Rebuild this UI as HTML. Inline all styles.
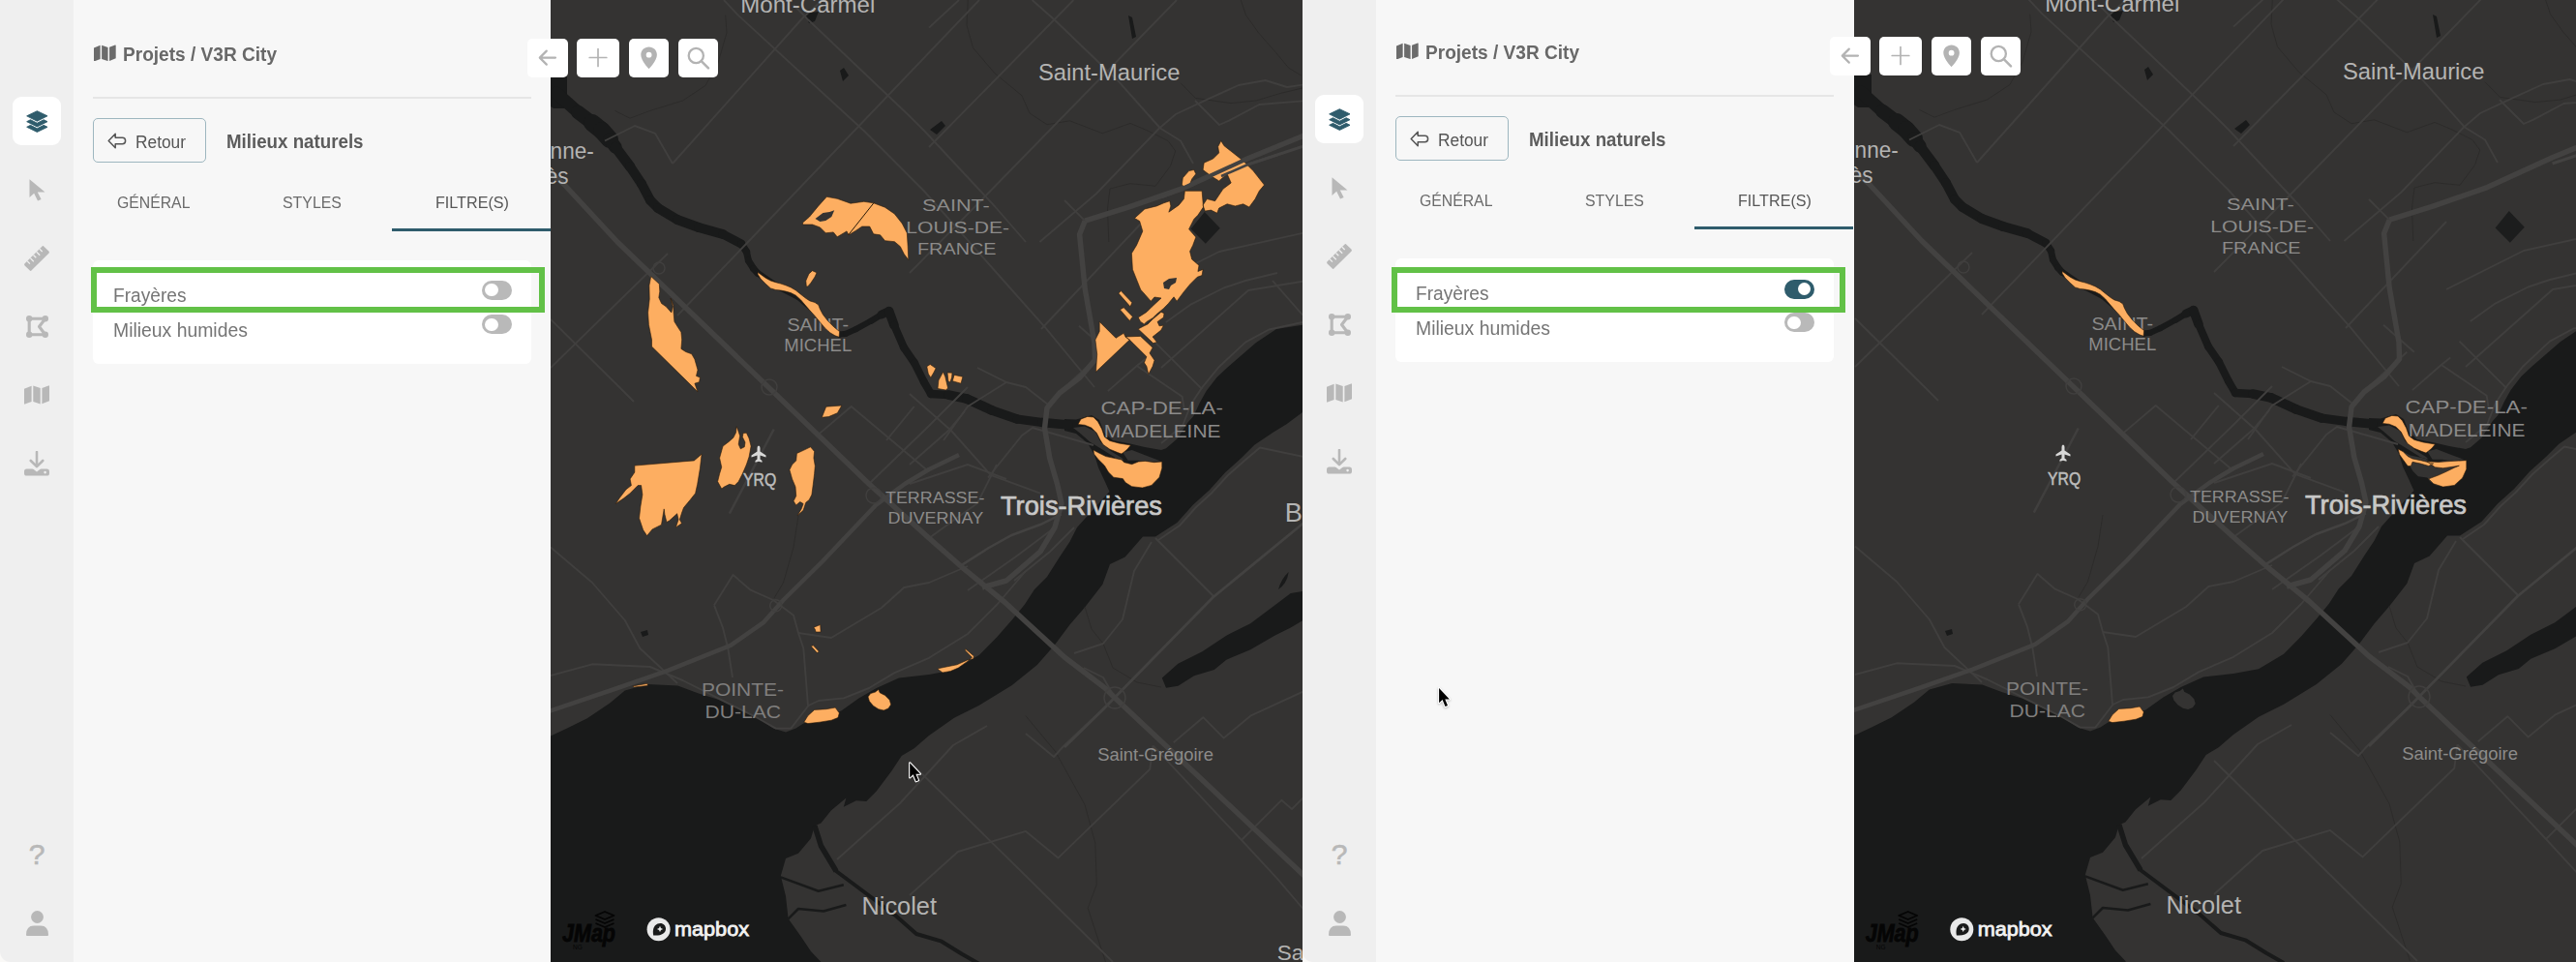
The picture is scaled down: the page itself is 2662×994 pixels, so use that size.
<!DOCTYPE html>
<html lang="fr"><head><meta charset="utf-8"><title>JMap NG - Filtres</title>
<style>
html,body{margin:0;padding:0}
body{width:2662px;height:994px;position:relative;overflow:hidden;background:#f7f7f7;font-family:"Liberation Sans",sans-serif}
.ab{position:absolute}
.shot{position:absolute;top:0;height:994px;overflow:hidden;background:#faf9f7}
.side{position:absolute;left:0;top:0;width:76px;height:994px;background:#efefef;border-bottom-left-radius:11px}
.pan{position:absolute;left:76px;top:0;width:493px;height:994px;background:#f7f7f7}
.tile{width:50px;height:50px;border-radius:9px;background:#fff}
.q{font-size:30px;line-height:36px;width:24px;text-align:center;color:#b8b8b8;-webkit-text-stroke:0.6px #b8b8b8}
.t{white-space:nowrap;line-height:1.2}
.t>span{display:inline-block;transform-origin:0 50%}
.title{font-size:19.5px;font-weight:700;color:#686868}
.h2{font-size:19.5px;font-weight:700;color:#5c5c5c}
.hr{width:453px;height:2px;background:#e6e6e6}
.back{width:114.5px;height:44px;border:1px solid #9db6bf;border-radius:5px;background:#f7f7f7}
.tab{font-size:17.3px;color:#6a6a6a}
.tab.act{color:#565656}
.ul{width:164px;height:3px;background:#2f5c6c}
.card{width:453px;height:106.5px;border-radius:6px;background:#fff}
.row{font-size:19.7px;color:#757575}
.tg{width:30.5px;height:20px;border-radius:10px;background:#b9b9b9}
.tg i{position:absolute;left:3.2px;top:3.2px;width:13.6px;height:13.6px;border-radius:50%;background:#fff}
.tg.on{background:#2f5c6c}
.tg.on i{left:13.6px}
.green{width:457px;height:34.9px;border:6px solid #62c147;border-top-width:6.6px;border-bottom-width:6.6px}
.mb{height:40.5px;background:#fff;border-radius:5px;overflow:hidden}
.mb svg{display:block}
</style></head>
<body>
<div class="shot" style="left:0;width:1346px">
<div class="side"></div><div class="pan"></div>
<svg class="ab" style="left:569px;top:0" width="777" height="994" viewBox="569 0 777 994" font-family="Liberation Sans, sans-serif">
<defs><g id="basemap" font-family="Liberation Sans, sans-serif">
<rect x="540" y="-10" width="830" height="1020" fill="#343332"/>
<path d="M1100 433 L1112 433.5 L1128 429 L1136 434 L1141 447 L1150 455 L1168 458.5 L1183 462 L1200 465 L1205 463.2 L1216.6 453.2 L1227.5 436.6 L1233.3 430 L1240 415.8 L1246.6 404.1 L1257.4 390 L1268 380 L1298 354 L1319 340 L1350 335 L1350 423 L1329.5 438.2 L1316 446.5 L1296.3 459.8 L1283 473 L1266.3 488 L1249.7 506.4 L1233 521.4 L1216.4 540 L1194 554.6 L1181 554.6 L1162.7 575.4 L1147 583 L1139.3 604 L1121 627.4 L1105.5 645.5 L1090 666.3 L1071.8 687 L1045.8 708 L1012 728.7 L986 741.7 L960 760 L944.7 773.3 L931.7 781 L921.3 796.7 L905.7 817.5 L895.3 828 L884.8 827.2 L871.8 833.7 L874.4 824.6 L858.8 837.6 L848.4 850.6 L841.9 853.2 L838 866.2 L825 881.8 L812 887 L806.8 905.1 L812 926 L814.6 949.3 L827.6 967.5 L838 983 L848.4 994 L850 1000 L555 1000 L555 766 L569 760.4 L586 752.6 L606.8 742.2 L630.2 726.6 L645.8 713.6 L669.2 707 L700.4 708.4 L721.2 716.2 L742 722.7 L783.5 742.2 L799 752.6 L812 756.4 L822.5 752.6 L830.3 747.4 L869.3 734.4 L887.5 721.4 L905.7 711 L929 700.6 L960 697 L986 692.3 L1012 676.7 L1030 658.5 L1045.8 640.4 L1058.8 624.8 L1069 609 L1082 596 L1095 575.4 L1105.5 559.8 L1113 545 L1123.3 533.5 L1146.5 508 L1142 498 L1135 483 L1131 470 L1124 458 L1112 448 L1100 445 Z" fill="#191a1a"/>
<path d="M1109 442 L1121 440.5 L1132 446 L1137.3 456.8 L1148 466.2 L1159 473 L1161.6 475.7 L1153.5 473.6 L1140 464.9 L1126.5 456.8 L1115.7 447.3 Z" fill="#343332"/>
<path d="M1160.3 467.6 L1169.7 464.9 L1183.2 470.3 L1199.5 476.4 L1188.6 477 L1175 475.7 L1165.7 475.7 Z" fill="#343332"/>
<path d="M907.8 712.4 L909.2 715.8 L914.6 718.5 L919.3 723.2 L920.7 728 L918 732 L913.2 734 L907.8 732.7 L902.4 729.3 L898.4 724.6 L897 719.9 L899.7 716.5 L904.5 715.1 Z" fill="#343332"/>
<path d="M1129.9 464.9 L1134.6 467.6 L1142.7 471.6 L1152.2 473.6 L1159 475 L1161.6 477.7 L1169.7 479.7 L1176.5 477 L1183.2 476.4 L1192.7 477.7 L1200.8 477 L1200.8 483.8 L1198 493.2 L1190 501.4 L1180.5 504 L1169.7 502.7 L1163 498.6 L1160.3 494.6 L1150.8 493.2 L1145.4 487.8 L1141.4 481 L1134.6 474.3 L1130.5 469 Z" fill="#343332"/>
<path d="M1200.8 700.4 L1217.4 685.8 L1242.4 673.3 L1267.3 656.7 L1292.2 644.2 L1317.2 625.5 L1333.8 613 L1350 610.5 L1350 639 L1333.8 648.4 L1317.2 656.7 L1292.2 671.3 L1267.3 681.7 L1254.8 692 L1234 698.3 L1217.4 708.7 L1205 710.8 Z" fill="#191a1a"/>
<path d="M1244.8 219 L1260.8 235.8 L1245.8 251.7 L1230.6 236.4 Z" fill="#1c1d1d"/>
<path d="M560 78 L586 78 L586 100 L584 112 L572 112 L560 104 Z" fill="#191a1a"/>
<path d="M575 96 L597.4 116" stroke="#191a1a" stroke-width="13" stroke-linecap="round" fill="none"/>
<path d="M597.4 116 L612 127" stroke="#191a1a" stroke-width="14.5" stroke-linecap="round" fill="none"/>
<path d="M612 127 L622 135" stroke="#191a1a" stroke-width="18" stroke-linecap="round" fill="none"/>
<path d="M622 135 L630 144" stroke="#191a1a" stroke-width="18" stroke-linecap="round" fill="none"/>
<path d="M630 144 L636 152" stroke="#191a1a" stroke-width="13.5" stroke-linecap="round" fill="none"/>
<path d="M636 152 L651 172" stroke="#191a1a" stroke-width="10.5" stroke-linecap="round" fill="none"/>
<path d="M651 172 L663 190" stroke="#191a1a" stroke-width="10" stroke-linecap="round" fill="none"/>
<path d="M663 190 L672 207" stroke="#191a1a" stroke-width="10" stroke-linecap="round" fill="none"/>
<path d="M672 207 L680 215" stroke="#191a1a" stroke-width="10" stroke-linecap="round" fill="none"/>
<path d="M680 215 L700 227" stroke="#191a1a" stroke-width="10" stroke-linecap="round" fill="none"/>
<path d="M700 227 L722 235" stroke="#191a1a" stroke-width="10" stroke-linecap="round" fill="none"/>
<path d="M722 235 L747 242" stroke="#191a1a" stroke-width="10" stroke-linecap="round" fill="none"/>
<path d="M747 242 L766 252" stroke="#191a1a" stroke-width="9" stroke-linecap="round" fill="none"/>
<path d="M766 252 L771.4 260" stroke="#191a1a" stroke-width="7.5" stroke-linecap="round" fill="none"/>
<path d="M771.4 260 L773.5 269.4" stroke="#191a1a" stroke-width="7" stroke-linecap="round" fill="none"/>
<path d="M773.5 269.4 L778.7 277.7" stroke="#191a1a" stroke-width="7" stroke-linecap="round" fill="none"/>
<path d="M778.7 277.7 L783 282.3" stroke="#191a1a" stroke-width="7" stroke-linecap="round" fill="none"/>
<path d="M783 282.3 L800 294" stroke="#191a1a" stroke-width="6.5" stroke-linecap="round" fill="none"/>
<path d="M800 294 L825 307" stroke="#191a1a" stroke-width="6" stroke-linecap="round" fill="none"/>
<path d="M825 307 L846 325" stroke="#191a1a" stroke-width="6" stroke-linecap="round" fill="none"/>
<path d="M846 325 L858 340" stroke="#191a1a" stroke-width="6" stroke-linecap="round" fill="none"/>
<path d="M858 340 L867.6 345.5" stroke="#191a1a" stroke-width="6" stroke-linecap="round" fill="none"/>
<path d="M867.6 345.5 L874.3 344.7" stroke="#191a1a" stroke-width="6" stroke-linecap="round" fill="none"/>
<path d="M874.3 344.7 L884.7 340" stroke="#191a1a" stroke-width="6" stroke-linecap="round" fill="none"/>
<path d="M884.7 340 L900 331.7" stroke="#191a1a" stroke-width="6" stroke-linecap="round" fill="none"/>
<path d="M900 331.7 L911 325" stroke="#191a1a" stroke-width="6.5" stroke-linecap="round" fill="none"/>
<path d="M911 325 L918.7 321.5" stroke="#191a1a" stroke-width="9" stroke-linecap="round" fill="none"/>
<path d="M918.7 321.5 L924 336" stroke="#191a1a" stroke-width="9.5" stroke-linecap="round" fill="none"/>
<path d="M924 336 L934 359" stroke="#191a1a" stroke-width="8" stroke-linecap="round" fill="none"/>
<path d="M934 359 L945 375" stroke="#191a1a" stroke-width="8" stroke-linecap="round" fill="none"/>
<path d="M945 375 L955 395" stroke="#191a1a" stroke-width="8" stroke-linecap="round" fill="none"/>
<path d="M955 395 L962 407" stroke="#191a1a" stroke-width="8" stroke-linecap="round" fill="none"/>
<path d="M962 407 L980 408" stroke="#191a1a" stroke-width="8.5" stroke-linecap="round" fill="none"/>
<path d="M980 408 L999 412" stroke="#191a1a" stroke-width="9.5" stroke-linecap="round" fill="none"/>
<path d="M999 412 L1025 424" stroke="#191a1a" stroke-width="10" stroke-linecap="round" fill="none"/>
<path d="M1025 424 L1051 433" stroke="#191a1a" stroke-width="9.5" stroke-linecap="round" fill="none"/>
<path d="M1051 433 L1077 436.5" stroke="#191a1a" stroke-width="9" stroke-linecap="round" fill="none"/>
<path d="M1077 436.5 L1104 439" stroke="#191a1a" stroke-width="9.5" stroke-linecap="round" fill="none"/>
<path d="M841.9 853.2 L848.4 874 L864 900 L884.8 915.5 L905.5 931 L926.3 946.7 L947 965 L973 972.7 L994 985.7 L1012 996" stroke="#191a1a" stroke-width="4" fill="none" stroke-linejoin="round"/>
<path d="M841.9 853.2 L848.4 874 L864 900" stroke="#191a1a" stroke-width="5.5" fill="none" stroke-linejoin="round"/>
<path d="M806.8 906.4 L845.8 920.7 L871.8 914.2" stroke="#191a1a" stroke-width="2.6" fill="none" stroke-linejoin="round"/>
<path d="M814.6 949.3 L825 939 L851 941.5 L874.4 935" stroke="#191a1a" stroke-width="2.6" fill="none" stroke-linejoin="round"/>
<path d="M1321 609 Q1330 603 1331.7 591 Q1324 598 1321 609Z" fill="#191a1a"/>
<path d="M1166 16 L1170 18 L1174 38 L1170 40 Z" fill="#191a1a"/>
<path d="M961 134 L973 125 L977 130 L968 139 Z" fill="#191a1a"/>
<path d="M868 73 L872 70 L877 78 L871 84 Z" fill="#191a1a"/>
<path d="M832 14 L846 12 L842 22 L836 24 Z" fill="#191a1a"/>
<path d="M662 653 L669 651 L670 656 L664 658 Z" fill="#191a1a"/>
<path d="M1060 739.7 L1090.5 776.4 L1121 831.4 L1131.8 871 L1133.3 913.9 L1124.2 938.3 L1142.5 994" stroke="#2b2a29" stroke-width="0.9" fill="none" stroke-linejoin="round"/>
<path d="M1121 627 L1128 650 L1140 665 L1150 690 L1175 705 L1200 710" stroke="#2b2a29" stroke-width="0.9" fill="none" stroke-linejoin="round"/>
<path d="M825 533 L820 565.5 L809.5 602 L800 618" stroke="#2b2a29" stroke-width="0.9" fill="none" stroke-linejoin="round"/>
<path d="M1000.3 0 L999 26 L1005.5 49.4 L1027.6 75.4 L1056 98.8 L1064 117 L1082 128.7 L1105.5 124.8 L1139.3 137.8 L1168 127.4 L1186 135 L1207 145.5 L1214.7 156 L1209.5 171.5 L1194 192.3 L1168 189.7 L1147 195 L1144.5 215.7 L1145.8 250" stroke="#2b2a29" stroke-width="0.9" fill="none" stroke-linejoin="round"/>
<path d="M1282.3 0 L1287.5 15.6 L1300.5 33.8 L1318.7 54.6 L1331.7 70.2 L1344.7 78" stroke="#2b2a29" stroke-width="0.9" fill="none" stroke-linejoin="round"/>
<path d="M1220 85.8 L1235.5 101.4 L1272 106.6 L1298 104 L1324 96.2 L1346 91" stroke="#2b2a29" stroke-width="0.9" fill="none" stroke-linejoin="round"/>
<path d="M749.7 15.6 L751 33.8 L742 65 L729 88.4 L705.5 104 L671.8 114.4 L651 122.2 L635.4 114.4" stroke="#2b2a29" stroke-width="0.9" fill="none" stroke-linejoin="round"/>
<path d="M1100 400.4 L1139.3 364.8" stroke="#403f3e" stroke-width="1.9" fill="none" stroke-linejoin="round"/>
<path d="M1144.9 404.1 L1174.8 378 L1184.2 370.4" stroke="#403f3e" stroke-width="1.9" fill="none" stroke-linejoin="round"/>
<path d="M1193.5 353.6 L1242.2 402.2" stroke="#403f3e" stroke-width="1.9" fill="none" stroke-linejoin="round"/>
<path d="M1174.8 378 L1221.6 409.7 L1223.5 421" stroke="#403f3e" stroke-width="1.9" fill="none" stroke-linejoin="round"/>
<path d="M1204.8 333 L1231 314.3 L1264.6 297.5 L1287 290 L1320 282" stroke="#403f3e" stroke-width="1.9" fill="none" stroke-linejoin="round"/>
<path d="M1315 290 L1346 325.5" stroke="#403f3e" stroke-width="1.9" fill="none" stroke-linejoin="round"/>
<path d="M1346 333 L1311.4 340.5 L1287 353.6 L1259 379.8 L1242.2 400.4 L1231 417.2 L1222 440 L1200 458" stroke="#403f3e" stroke-width="1.9" fill="none" stroke-linejoin="round"/>
<path d="M1115 336.8 L1146.8 364.8" stroke="#403f3e" stroke-width="1.9" fill="none" stroke-linejoin="round"/>
<path d="M569 565.5 L612 602 L645.8 641 L661.4 670 L700 706" stroke="#403f3e" stroke-width="1.9" fill="none" stroke-linejoin="round"/>
<path d="M738 625.3 L757.5 594 L775.7 609.7 L799 620 L820 635.7 L825 654 L830.3 670 L835 729" stroke="#403f3e" stroke-width="1.9" fill="none" stroke-linejoin="round"/>
<path d="M738 625.3 L747 648.7 L752.3 670 L757 700" stroke="#403f3e" stroke-width="1.9" fill="none" stroke-linejoin="round"/>
<path d="M825 654 L859 659 L911 628 L934.3 607 L960 602 L1000 585" stroke="#403f3e" stroke-width="1.9" fill="none" stroke-linejoin="round"/>
<path d="M846 448.6 L879.7 420 L960 487.6" stroke="#403f3e" stroke-width="1.9" fill="none" stroke-linejoin="round"/>
<path d="M916 455 L944.7 420" stroke="#403f3e" stroke-width="1.9" fill="none" stroke-linejoin="round"/>
<path d="M940 407 L983 445 L1023.8 490.8 L1075 509.7" stroke="#403f3e" stroke-width="1.9" fill="none" stroke-linejoin="round"/>
<path d="M1021 493.5 L1056 450 L1067 442 L1130 460" stroke="#403f3e" stroke-width="1.9" fill="none" stroke-linejoin="round"/>
<path d="M940 480 L980 445 L997 425" stroke="#403f3e" stroke-width="1.9" fill="none" stroke-linejoin="round"/>
<path d="M940 500 L1000 480 L1040 495" stroke="#403f3e" stroke-width="1.9" fill="none" stroke-linejoin="round"/>
<path d="M1000 610 L1050 575 L1090 545" stroke="#403f3e" stroke-width="1.9" fill="none" stroke-linejoin="round"/>
<path d="M1048 600 L1085 570 L1110 545" stroke="#403f3e" stroke-width="1.9" fill="none" stroke-linejoin="round"/>
<path d="M960 556 L1010 520 L1030 480" stroke="#403f3e" stroke-width="1.9" fill="none" stroke-linejoin="round"/>
<path d="M1083 418 L1060 400 L1040 395 L1010 380" stroke="#403f3e" stroke-width="1.9" fill="none" stroke-linejoin="round"/>
<path d="M1040 395 L1000 420 L975 455" stroke="#403f3e" stroke-width="1.9" fill="none" stroke-linejoin="round"/>
<path d="M569 698 L612 686.3 L671.8 689 L705.5 703 L742 721.4 L783.5 742.2 L801.7 752.6 L817.3 752.6 L835.5 729 L846 724 L872 721.4 L898 711 L924 695.4 L960 679.8 L1000 655 L1030 625 L1060 590" stroke="#403f3e" stroke-width="1.9" fill="none" stroke-linejoin="round"/>
<path d="M820 5 L835.5 20.8 L939.4 119.5 L955 135 L1027.8 213 L1060 250" stroke="#403f3e" stroke-width="1.9" fill="none" stroke-linejoin="round"/>
<path d="M748 0 L762.7 15.6 L892.6 135 L955 197.5 L1038 291 L1079.7 337.8 L1131 400" stroke="#403f3e" stroke-width="1.9" fill="none" stroke-linejoin="round"/>
<path d="M695 169 L830 18 L850 0" stroke="#403f3e" stroke-width="1.9" fill="none" stroke-linejoin="round"/>
<path d="M569 330 L640 400 L655 415" stroke="#403f3e" stroke-width="1.9" fill="none" stroke-linejoin="round"/>
<path d="M569 380 L690 262" stroke="#403f3e" stroke-width="1.9" fill="none" stroke-linejoin="round"/>
<path d="M1012 0 L773 250 L700 326" stroke="#403f3e" stroke-width="1.9" fill="none" stroke-linejoin="round"/>
<path d="M1100 207 L1121.2 228.2" stroke="#403f3e" stroke-width="1.9" fill="none" stroke-linejoin="round"/>
<path d="M960 28.6 L991 0" stroke="#403f3e" stroke-width="1.9" fill="none" stroke-linejoin="round"/>
<path d="M960 152 L1109.4 0" stroke="#403f3e" stroke-width="1.9" fill="none" stroke-linejoin="round"/>
<path d="M1074.4 250 L1133 200 L1197.5 133 L1215 118 L1249.4 101.9 L1280 88 L1307.6 83 L1330 90 L1350 87" stroke="#403f3e" stroke-width="1.9" fill="none" stroke-linejoin="round"/>
<path d="M1235 104 L1260 129 L1270 124.7 L1301.4 108 L1350 104" stroke="#403f3e" stroke-width="1.9" fill="none" stroke-linejoin="round"/>
<path d="M1066.6 0 L1090 20.8 L1155 83.2 L1199 132.5 L1220 145.5 L1233 169" stroke="#403f3e" stroke-width="1.9" fill="none" stroke-linejoin="round"/>
<path d="M940 282 L1020.8 200 L1216 0" stroke="#403f3e" stroke-width="1.9" fill="none" stroke-linejoin="round"/>
<path d="M625 145.5 L656 130 L677 137.8 L695 169" stroke="#403f3e" stroke-width="1.9" fill="none" stroke-linejoin="round"/>
<path d="M1076 340 L1180 230" stroke="#403f3e" stroke-width="1.9" fill="none" stroke-linejoin="round"/>
<path d="M898 500 L960 440 L1000 400" stroke="#403f3e" stroke-width="1.9" fill="none" stroke-linejoin="round"/>
<path d="M1152 721 L1100 770 L1089 782 L1060 758" stroke="#403f3e" stroke-width="1.9" fill="none" stroke-linejoin="round"/>
<path d="M1283 868 L1324.3 826.8 L1335 836 L1345.6 825.3 L1352 819" stroke="#403f3e" stroke-width="1.9" fill="none" stroke-linejoin="round"/>
<path d="M1212.7 767.2 L1243.3 741.2 L1264.7 762.6 L1292.2 739.7 L1350 713" stroke="#403f3e" stroke-width="1.9" fill="none" stroke-linejoin="round"/>
<path d="M1191.4 770.3 L1283 868 L1319.7 907.7 L1350 943" stroke="#403f3e" stroke-width="1.9" fill="none" stroke-linejoin="round"/>
<path d="M1152 721 L1140 700 L1120 690" stroke="#403f3e" stroke-width="1.9" fill="none" stroke-linejoin="round"/>
<path d="M940 787 L1060 905 L1150 994" stroke="#403f3e" stroke-width="1.9" fill="none" stroke-linejoin="round"/>
<path d="M865 888 L930 830 L985 770 L1020 750" stroke="#403f3e" stroke-width="1.9" fill="none" stroke-linejoin="round"/>
<path d="M940 925 L990 880 L1060 858.9 L1093.6 886.4 L1188.3 794.7 L1191.4 770.3" stroke="#403f3e" stroke-width="1.9" fill="none" stroke-linejoin="round"/>
<path d="M1194 556 L1255 617" stroke="#403f3e" stroke-width="1.9" fill="none" stroke-linejoin="round"/>
<path d="M1190 560 L1172 590 L1160 640 L1140 665 L1110 675" stroke="#403f3e" stroke-width="1.9" fill="none" stroke-linejoin="round"/>
<path d="M1350 472.5 L1302 462.5 L1286 476 L1269 491 L1252 509.5 L1236 524 L1219 543 L1197 558" stroke="#403f3e" stroke-width="1.9" fill="none" stroke-linejoin="round"/>
<path d="M1180 300 L1260 260 L1350 240" stroke="#403f3e" stroke-width="1.9" fill="none" stroke-linejoin="round"/>
<path d="M1200 380 L1290 300 L1350 290" stroke="#403f3e" stroke-width="1.9" fill="none" stroke-linejoin="round"/>
<path d="M1100 772 L1139 734 L1253.7 617 L1350 538" stroke="#434241" stroke-width="2.8" fill="none" stroke-linejoin="round"/>
<path d="M560 737 L569 734.4 L638 711 L690 692.8 L755 666.8 L788.7 643.4 L809.5 620 L850 580 L905 522 L935 500 L960 485 L991 470" stroke="#434241" stroke-width="4.5" fill="none" stroke-linejoin="round"/>
<path d="M560 170 L583.4 191 L638 250 L898 500 L960 556 L993.8 585.8 L1038 622 L1100 679 L1142 711 L1152 721 L1250 813 L1350 907" stroke="#434241" stroke-width="5.5" fill="none" stroke-linejoin="round"/>
<path d="M1121.2 228.2 L1166 214.2 L1222.3 194.6 L1289.6 163.7 L1350 139" stroke="#434241" stroke-width="5.5" fill="none" stroke-linejoin="round"/>
<path d="M1289.6 170 L1350 150" stroke="#434241" stroke-width="3" fill="none" stroke-linejoin="round"/>
<path d="M1121.2 228.2 L1115.6 242.3 L1121.2 298.4 L1131 354.6 L1131.5 372 L1116 390 L1095 406 L1082 421.5 L1079.5 442.3 L1084.8 473.5 L1092.5 500 L1097 520 L1090 545 L1075 570 L1040 600 L1015 607" stroke="#434241" stroke-width="5.5" fill="none" stroke-linejoin="round"/>
<circle cx="1152" cy="721" r="11" fill="none" stroke="#403f3e" stroke-width="1.5"/>
<path d="M991.4 585.4 L1021 566.5 L1045.4 553 L1075 542 L1096.8 531.4" stroke="#434241" stroke-width="2.5" fill="none"/>
<circle cx="903" cy="512" r="8" fill="none" stroke="#403f3e" stroke-width="1.5"/>
<circle cx="681" cy="277" r="6" fill="none" stroke="#403f3e" stroke-width="1.5"/>
<circle cx="795" cy="400" r="8" fill="none" stroke="#403f3e" stroke-width="1.5"/>
<circle cx="801.7" cy="625.8" r="6" fill="none" stroke="#403f3e" stroke-width="1.5"/>
<path d="M753.8 530.7 L799.7 443.5" stroke="#403f3e" stroke-width="2.5" fill="none"/>
</g><g id="maplabels" font-family="Liberation Sans, sans-serif"><text x="765.3" y="12.5" font-size="24.5" fill="#b4b4b3" font-weight="400" text-anchor="start" textLength="139" lengthAdjust="spacingAndGlyphs">Mont-Carmel</text>
<text x="1073" y="82.6" font-size="24.5" fill="#b4b4b3" font-weight="400" text-anchor="start" textLength="146.4" lengthAdjust="spacingAndGlyphs">Saint-Maurice</text>
<text x="470.8" y="163.7" font-size="24.5" fill="#b4b4b3" font-weight="400" text-anchor="start" textLength="143" lengthAdjust="spacingAndGlyphs">Saint-Étienne-</text>
<text x="495" y="189.7" font-size="24.5" fill="#b4b4b3" font-weight="400" text-anchor="start" textLength="92.6" lengthAdjust="spacingAndGlyphs">des-Grès</text>
<text x="953" y="218.1" font-size="16.7" fill="#8c8b8a" font-weight="400" text-anchor="start" textLength="69.8" lengthAdjust="spacingAndGlyphs">SAINT-</text>
<text x="936.3" y="240.8" font-size="16.7" fill="#8c8b8a" font-weight="400" text-anchor="start" textLength="106.7" lengthAdjust="spacingAndGlyphs">LOUIS-DE-</text>
<text x="948" y="263" font-size="16.7" fill="#8c8b8a" font-weight="400" text-anchor="start" textLength="81.5" lengthAdjust="spacingAndGlyphs">FRANCE</text>
<text x="813.4" y="342.3" font-size="17.5" fill="#8c8b8a" font-weight="400" text-anchor="start" textLength="63.6" lengthAdjust="spacingAndGlyphs">SAINT-</text>
<text x="810.3" y="363" font-size="17.5" fill="#8c8b8a" font-weight="400" text-anchor="start" textLength="69.9" lengthAdjust="spacingAndGlyphs">MICHEL</text>
<text x="1137.4" y="428.2" font-size="18.5" fill="#8c8b8a" font-weight="400" text-anchor="start" textLength="126.5" lengthAdjust="spacingAndGlyphs">CAP-DE-LA-</text>
<text x="1140.8" y="451.5" font-size="18.5" fill="#8c8b8a" font-weight="400" text-anchor="start" textLength="120.6" lengthAdjust="spacingAndGlyphs">MADELEINE</text>
<text stroke="#bdbdbc" stroke-width="0.5" x="768" y="501.9" font-size="17.5" fill="#bdbdbc" font-weight="400" text-anchor="start" textLength="34.2" lengthAdjust="spacingAndGlyphs">YRQ</text>
<text x="915" y="520" font-size="16.7" fill="#8c8b8a" font-weight="400" text-anchor="start" textLength="102.4" lengthAdjust="spacingAndGlyphs">TERRASSE-</text>
<text x="917.6" y="540.8" font-size="16.7" fill="#8c8b8a" font-weight="400" text-anchor="start" textLength="98.7" lengthAdjust="spacingAndGlyphs">DUVERNAY</text>
<text stroke="#c8c8c7" stroke-width="0.7" x="1034" y="532.3" font-size="27.5" fill="#c8c8c7" font-weight="500" text-anchor="start" textLength="166.9" lengthAdjust="spacingAndGlyphs">Trois-Rivières</text>
<text x="1327.8" y="539" font-size="27" fill="#b4b4b3" font-weight="400" text-anchor="start" textLength="130" lengthAdjust="spacingAndGlyphs">Bécancour</text>
<text x="725" y="719.3" font-size="18.5" fill="#807f7e" font-weight="400" text-anchor="start" textLength="85" lengthAdjust="spacingAndGlyphs">POINTE-</text>
<text x="728.4" y="741.6" font-size="18.5" fill="#807f7e" font-weight="400" text-anchor="start" textLength="78.6" lengthAdjust="spacingAndGlyphs">DU-LAC</text>
<text x="1134.2" y="786.2" font-size="19" fill="#8c8b8a" font-weight="400" text-anchor="start" textLength="119.8" lengthAdjust="spacingAndGlyphs">Saint-Grégoire</text>
<text x="890.5" y="945.4" font-size="25" fill="#b4b4b3" font-weight="400" text-anchor="start" textLength="77.5" lengthAdjust="spacingAndGlyphs">Nicolet</text>
<text x="1319.7" y="992" font-size="22" fill="#b4b4b3" font-weight="400" text-anchor="start" textLength="140" lengthAdjust="spacingAndGlyphs">Saint-Célestin</text>
<path d="M784 460.5 q1.5 0 1.5 2.5 v3.5 l6 4 v2 l-6 -2 v4 l2 1.6 v1.6 l-3.5 -1 l-3.5 1 v-1.6 l2 -1.6 v-4 l-6 2 v-2 l6 -4 v-3.5 q0 -2.5 1.5 -2.5z" fill="#d8d8d7"/></g></defs>
<use href="#basemap"/>
<use href="#maplabels"/>
<path d="M672.7 285.6 L681.3 293.4 L681.8 301.2 L680.8 307.4 L683.6 313.6 L688.3 316.8 L693.8 323 L695.3 316.8 L693 308.2 L695.8 315.2 L696.1 323 L696.9 332.3 L700.8 338.6 L703.9 343.2 L704.7 351 L703.9 360.4 L708.6 363.5 L714.8 365.8 L717.9 371.3 L721 382.2 L719.5 388.4 L723.4 390 L722.6 394.7 L717.9 396.2 L721 404.8 L673.5 358.1 L673.5 351 L670.4 335.5 L669.6 323 L671.2 309 L670.9 294.9 Z M783.1 281.3 L786 283.4 L791.2 287.2 L796.4 290.1 L801.6 291.7 L806.8 293.1 L812 294.8 L817.2 296.9 L822.4 300 L827.6 304.2 L832.8 308.3 L836.9 310.9 L842.1 312.5 L845.8 315.1 L847.3 319.2 L850.4 325 L855.6 331.7 L861.9 338 L867.6 342.6 L867.1 348.3 L862.9 346.8 L857.7 343.7 L852.5 339 L847.3 332.8 L842.1 326.5 L836.9 320.8 L832.8 316.1 L827.6 309.9 L822.4 305.2 L817.2 302.6 L812 301.1 L806.8 300 L801.6 299.5 L796.4 297.9 L791.2 293.3 L786 288.1 L783.1 283.4 Z M833.3 295.9 L832.8 290.1 L835.9 282.9 L839.5 279.7 L844 281.8 L842.1 286 L838 292.2 L834.8 295.9 Z M853.7 420.2 L869.8 419 L865.4 426.7 L856.3 430.6 L849.3 431.2 Z M655.8 481.1 L717.3 475.9 L725.1 469.2 L723.4 484.1 L720.7 500.3 L718.6 509.7 L713.2 516.5 L706.5 524.6 L704.5 530 L702.4 536.8 L704.5 540.8 L698.4 544.9 L701.1 536.8 L699.7 530.7 L691.6 538.1 L688.9 539.5 L686.9 531.4 L686.2 525.9 L683.5 542.2 L674.1 546.9 L668.6 553.6 L664.6 547.6 L660.5 535.4 L661.9 523.2 L663.9 511.1 L662.6 501.6 L659.2 501.6 L651.1 509.7 L644.3 515.1 L636.2 520.5 L640.3 514.5 L647 505.7 L652.4 501.6 L651.1 494.9 L655.8 488.1 Z M761.2 440.8 L762.6 444.2 L764.6 450.3 L763.2 459.1 L765.3 463.8 L769.3 461.8 L770 457 L767.3 451.6 L768 447.6 L771.4 447.3 L774.1 453 L776.1 461.1 L774.1 471.9 L771.4 480 L767.3 489.5 L763.2 497.6 L759.2 501.6 L753.8 500.3 L748.4 503 L745.7 505 L741.6 497.6 L743.6 489.5 L745.7 482.7 L743.6 473.2 L747 461.1 L753.1 456.4 L757.8 452.3 L760.5 446.9 Z M837.6 461.8 L841.6 466.5 L840.9 473.2 L842.3 481.4 L841.6 489.5 L840.3 500.3 L838.9 511.1 L836.2 516.5 L832.8 519.2 L830.1 527.3 L824.1 532.7 L828.1 525.9 L830.1 520.5 L826.8 518.5 L822.7 521.9 L820 517.8 L822.7 512.4 L822 503 L818.6 494.9 L815.9 485.4 L818.6 480 L822.7 475.9 L823.4 468.5 L830.8 465.1 Z M1261.8 145.4 L1264.9 150.6 L1284.7 166.2 L1295.1 176.6 L1306.5 191.1 L1301.3 197.3 L1297.1 205.6 L1290.9 214 L1284.7 210.8 L1276.4 212.9 L1268.1 210.8 L1259.7 215 L1257.7 220.2 L1251.4 217.1 L1245.2 218.1 L1243.1 211.9 L1247.3 205.6 L1255.6 207.7 L1263.9 195.3 L1272.2 189 L1268.1 179.7 L1259.7 186.9 L1251.4 181.8 L1243.1 175.5 L1244.2 168.2 L1253.5 164.1 L1259.7 157.9 L1258.7 151.6 Z M1221.3 191.1 L1222.3 183.8 L1228.6 176.6 L1233.8 175.5 L1235.8 179.7 L1231.7 184.9 L1229.6 190.1 L1224.4 193.2 Z M1224.4 197.3 L1242.1 197.3 L1243.5 214 L1237.9 222.3 L1233.8 226.4 L1228.6 236.8 L1235.8 245.1 L1232.7 253.4 L1229.6 259.7 L1231.7 268 L1239 274.2 L1237.9 280.5 L1243.1 278.4 L1242.1 284.6 L1237.3 286.2 L1229.8 293.7 L1223.6 301.2 L1216.1 311.2 L1213 306.8 L1207.3 313.7 L1202.4 318.7 L1194.9 324.9 L1191.1 328.7 L1184.9 332.4 L1182.4 334.9 L1178.6 332.4 L1176.2 328 L1184.9 322.4 L1189.9 317.4 L1200 308 L1193 307 L1189.3 311.2 L1178.7 299.2 L1170.4 278.4 L1169.4 261.8 L1174.5 253.4 L1180.8 238.9 L1177.7 228.5 L1172.5 225.4 L1182.9 216 L1195.3 212.9 L1202.6 209.8 L1208.8 207.7 L1209.9 212.9 L1207.8 219.2 L1218.2 211.9 L1223.4 205.6 Z M1155.9 303.1 L1158.4 300.6 L1169.9 312.7 L1168 316.8 Z M1157.4 319.9 L1161.2 317.7 L1170.5 327.2 L1167.4 331.4 Z M1176.2 339.9 L1181.8 337 L1186.1 334.9 L1191.1 329.9 L1199.9 322.4 L1203 323.7 L1202.4 328 L1196.1 332.4 L1198 336.8 L1202.4 336.2 L1199.9 341.1 L1193.6 346.1 L1191.1 348 L1195.5 353.6 L1191.7 354.6 Z M1136.2 332.4 L1153.1 349.3 L1161.2 344.3 L1163 348 L1167.4 351.1 L1132.5 384.2 L1133.7 366.1 L1131.9 351.1 L1136.2 342.4 Z M1163 348 L1178.6 347.4 L1191.1 359.2 L1188 364.9 L1193 372.3 L1191.1 378.6 L1186.8 386.7 L1184.9 378.6 L1182.4 374.8 L1184.9 368.6 L1168 351.8 Z M1114 438.5 L1117 433 L1123.8 430.4 L1130 431 L1134.6 435.8 L1138.6 443.2 L1141.4 451.4 L1146.8 455.4 L1156.2 458 L1168.4 460 L1165 464.2 L1161.6 467 L1159 469 L1155 467.6 L1146.8 464.2 L1140 459.5 L1136.6 454 L1133.2 447.3 L1127.8 442 L1121 439.2 Z M1129.9 464.9 L1134.6 467.6 L1142.7 471.6 L1152.2 473.6 L1159 475 L1161.6 477.7 L1169.7 479.7 L1176.5 477 L1183.2 476.4 L1192.7 477.7 L1200.8 477 L1200.8 483.8 L1198 493.2 L1190 501.4 L1180.5 504 L1169.7 502.7 L1163 498.6 L1160.3 494.6 L1150.8 493.2 L1145.4 487.8 L1141.4 481 L1134.6 474.3 L1130.5 469 Z M957.8 378.7 L961.2 376.5 L967.1 380.6 L964.9 384.9 L961.8 390.2 L959.3 386.2 Z M969 401.5 L969.9 393 L974.6 384.3 L976.8 389.3 L979.6 401.1 L977.4 403 Z M979 385 L984 385.2 L983.6 390 L981.8 395 L979.9 393.7 Z M986.1 387.4 L994.9 389.3 L993 396.2 L984.3 393.7 Z M829.6 230 L836.5 224 L845.4 213.2 L854.3 203.3 L865.2 205.3 L879 210.2 L892.8 208.3 L902.7 209.8 L914.5 214.2 L924.4 221 L932.3 231 L937.3 240.8 L938.2 254.7 L938.8 268.5 L934.3 262.6 L930.3 254.7 L924.4 249.7 L914.5 248.7 L909.6 242.8 L902.7 241.8 L898.7 234 L890.8 234 L885 237.9 L877 242.8 L875 238.9 L865.2 244.8 L861.2 239.9 L853.3 240.8 L847.4 234.9 L839.5 232 L829.6 232 Z M830.8 746.2 L834.9 739.5 L841.6 733.4 L853.8 732.7 L863.2 731.1 L867.3 736.8 L866 741.5 L859.2 744.2 L847 746.2 L834.9 747.6 Z M907.8 712.4 L909.2 715.8 L914.6 718.5 L919.3 723.2 L920.7 728 L918 732 L913.2 734 L907.8 732.7 L902.4 729.3 L898.4 724.6 L897 719.9 L899.7 716.5 L904.5 715.1 Z M840.9 648.2 L847.7 645.5 L848.1 653 L843 653 L842.3 650.3 Z M838.2 667.8 L840.3 666.8 L846.4 673.2 L844.3 674.6 Z M654 708.9 L669.2 706.3 L669.2 708.4 L655 710 Z M969.3 690.8 L975.4 689.5 L988.9 686.8 L999.7 682 L1005.8 680.7 L1006.5 678 L997.7 670.5 L997.3 671.9 L1004.5 679.3 L999.7 683.4 L990.3 690.1 L982.2 693.5 L974 694.9 L969.3 691.5 Z" fill="#fdae61" stroke="#2a1a08" stroke-width="0.6" stroke-linejoin="round"/><path d="M1202 292 L1208 288 L1216 287 L1215 292 L1210 295 L1208 299 L1203 298 Z M842.5 226 L850.4 220.1 L857.3 219.1 L862.2 217.2 L859.3 224.1 L853.3 228 L847.4 229 Z" fill="#343332"/><path d="M1200 203.5 L1222.3 194.6 L1289.6 163.7 L1320 151" stroke="#434241" stroke-width="4" fill="none"/><path d="M1262 182 L1289.6 170 L1320 160" stroke="#434241" stroke-width="2.5" fill="none"/><path d="M903 209.6 L876.5 243" stroke="#2a1a08" stroke-width="1" fill="none"/>
<path transform="translate(940.2,788.3)" d="M0 0 L0 15.2 L3.5 12 L6.4 19 L8.9 18 L6.2 11.5 L10.8 11.4 Z" fill="#000" stroke="#fff" stroke-width="2.2" stroke-linejoin="round" paint-order="stroke"/>
<g transform="translate(0,0)">
<text x="581" y="973" font-size="26" font-weight="700" font-style="italic" fill="#050505" stroke="#050505" stroke-width="0.8" textLength="55" lengthAdjust="spacingAndGlyphs">JMap</text>
<text x="592" y="980.5" font-size="6.5" fill="#050505">NG</text>
<path d="M625 942 L634.5 946 L625 950 L615.5 946 Z M615.5 950 L625 954 L634.5 950 M615.5 954 L625 958 L634.5 954" fill="none" stroke="#050505" stroke-width="1.8" stroke-linejoin="round"/>
<circle cx="680.6" cy="960.3" r="12" fill="#e9e9e9"/>
<path d="M675.2 966.5 C674.2 962 675 956.5 679.5 954.5 C684 952.6 688.2 955.5 688 960 C687.8 964.5 683 967.2 675.2 966.5 Z" fill="#191a1a"/>
<path d="M682 956.8 l1 2.1 l2.1 1 l-2.1 1 l-1 2.1 l-1 -2.1 l-2.1 -1 l2.1 -1 z" fill="#e9e9e9"/>
<text x="697" y="966.5" font-size="21" font-weight="400" fill="#f2f2f2" stroke="#f2f2f2" stroke-width="0.8" textLength="77" lengthAdjust="spacingAndGlyphs">mapbox</text>
</g>
</svg>
<div class="ab tile" style="left:13px;top:100px"></div>
<svg class="ab" style="left:26.700000000000003px;top:113.7px" width="23" height="23" viewBox="0 0 23 23">
<g fill="#2f5c6c" stroke="#2f5c6c" stroke-width="0.9" stroke-linejoin="round">
<path d="M11.34 0.7 L22 5.85 L11.34 11.2 L0.7 5.85 Z"/>
<path d="M0.7 11.67 L4.5 9.76 L11.34 13.2 L18.2 9.76 L22 11.67 L11.34 16.9 Z"/>
<path d="M0.7 17.27 L4.5 15.36 L11.34 18.8 L18.2 15.36 L22 17.27 L11.34 22.4 Z"/>
</g></svg>
<svg class="ab" style="left:29.5px;top:184.5px" width="17" height="23" viewBox="0 0 17 23">
<path d="M0.5 0.3 L0.5 19 L5.2 14.8 L9 22.6 L12.6 21 L8.8 13.4 L16.5 13.4 Z" fill="#b8b8b8"/>
</svg>
<svg class="ab" style="left:25px;top:253.5px" width="26" height="26" viewBox="0 0 26 26">
<g transform="rotate(-45 13 13)"><rect x="-1" y="8" width="28" height="10" rx="1.5" fill="#b8b8b8"/>
<g stroke="#efefef" stroke-width="1.3"><path d="M4 8v4M8.5 8v5M13 8v4M17.5 8v5M22 8v4"/></g></g>
</svg>
<svg class="ab" style="left:26.5px;top:326px" width="23" height="23" viewBox="0 0 23 23">
<path d="M3.2 3.2 L19.8 3.2 L13.5 11.5 L19.8 19.8 L3.2 19.8 Z" fill="none" stroke="#b8b8b8" stroke-width="3.1" stroke-linejoin="round"/>
<circle cx="3.2" cy="3.2" r="3.2" fill="#b8b8b8"/><circle cx="19.8" cy="3.2" r="3.2" fill="#b8b8b8"/>
<circle cx="3.2" cy="19.8" r="3.2" fill="#b8b8b8"/><circle cx="19.8" cy="19.8" r="3.2" fill="#b8b8b8"/>
</svg>
<svg class="ab" style="left:25px;top:398px" width="26" height="20" viewBox="0 0 26 20">
<path d="M0 3.8 L7.6 0.8 L7.6 17 L0.8 19.6 Q0 19.9 0 19 Z" fill="#b8b8b8"/>
<path d="M9.3 0.6 L16.7 3.1 L16.7 19.4 L9.3 16.9 Z" fill="#b8b8b8"/>
<path d="M18.4 3 L25.2 0.4 Q26 0.1 26 1 L26 16.2 L18.4 19.2 Z" fill="#b8b8b8"/>
</svg>
<svg class="ab" style="left:25px;top:466px" width="26" height="26" viewBox="0 0 26 26">
<path d="M13 1 V15.5 M6.8 10 L13 16.2 L19.2 10" fill="none" stroke="#b8b8b8" stroke-width="2.6" stroke-linecap="round" stroke-linejoin="round"/>
<rect x="0" y="18.6" width="26" height="7" rx="2.6" fill="#b8b8b8"/>
<path d="M8.5 18 L13 21.5 L17.5 18 Z" fill="#efefef"/>
<circle cx="21.6" cy="22.1" r="1.3" fill="#efefef"/>
</svg>
<div class="ab q" style="left:26px;top:864.7px">?</div>
<svg class="ab" style="left:26.5px;top:941px" width="23" height="26" viewBox="0 0 23 26">
<circle cx="11.5" cy="6.5" r="6.4" fill="#b8b8b8"/>
<path d="M0 25 Q0 15.5 8 15.5 L15 15.5 Q23 15.5 23 25 Q23 26 22 26 L1 26 Q0 26 0 25 Z" fill="#b8b8b8"/>
</svg>
<svg class="ab" style="left:97.3px;top:45.5px" width="22.7" height="17.8" viewBox="0 0 26 20">
<path d="M0 3.8 L7.6 0.8 L7.6 17 L0.8 19.6 Q0 19.9 0 19 Z" fill="#6b6b6b"/>
<path d="M9.3 0.6 L16.7 3.1 L16.7 19.4 L9.3 16.9 Z" fill="#6b6b6b"/>
<path d="M18.4 3 L25.2 0.4 Q26 0.1 26 1 L26 16.2 L18.4 19.2 Z" fill="#6b6b6b"/>
</svg>
<div class="ab t title" style="left:127px;top:44.5px"><span style="transform:scaleX(0.9782)">Projets / V3R City</span></div>
<div class="ab hr" style="left:96px;top:100px"></div>
<div class="ab back" style="left:96px;top:122px">
<svg class="ab" style="left:14px;top:14px" width="20" height="17" viewBox="0 0 20 17"><path d="M8.2 1.2 L1.2 8.5 L8.2 15.8 L8.2 11.7 L15.5 11.7 Q18.6 11.7 18.6 8.5 Q18.6 5.3 15.5 5.3 L8.2 5.3 Z" fill="none" stroke="#555" stroke-width="1.5" stroke-linejoin="round"/></svg>
<span class="ab t" style="left:43px;top:13.5px;font-size:17.5px;color:#555"><span style="transform:scaleX(0.9901)">Retour</span></span></div>
<div class="ab t h2" style="left:233.5px;top:134.5px"><span style="transform:scaleX(0.9602)">Milieux naturels</span></div>
<div class="ab t tab" style="left:120.5px;top:199.3px"><span style="transform:scaleX(0.9131)">GÉNÉRAL</span></div>
<div class="ab t tab" style="left:291.7px;top:199.3px"><span style="transform:scaleX(0.9194)">STYLES</span></div>
<div class="ab t tab act" style="left:449.5px;top:199.3px"><span style="transform:scaleX(0.934)">FILTRE(S)</span></div>
<div class="ab ul" style="left:405px;top:236px"></div>
<div class="ab card" style="left:96px;top:269px"></div>
<div class="ab t row" style="left:117px;top:294.3px"><span style="transform:scaleX(0.9715)">Frayères</span></div>
<div class="ab t row" style="left:117px;top:329.5px"><span style="transform:scaleX(0.9842)">Milieux humides</span></div>
<div class="ab tg" style="left:498px;top:289.5px"><i></i></div>
<div class="ab tg" style="left:498px;top:325.4px"><i></i></div>
<div class="ab green" style="left:94px;top:276.3px"></div>
<div class="ab mb" style="left:545px;top:39.6px;width:41.6px"><svg width="41.6" height="40.5" viewBox="0 0 41.6 40.5"><path d="M29 19.6 H13 M19.8 12.6 L12.8 19.6 L19.8 26.6" fill="none" stroke="#b3b3b3" stroke-width="2.2" stroke-linecap="round" stroke-linejoin="round"/></svg></div>
<div class="ab mb" style="left:596.3px;top:39.6px;width:44px"><svg width="44" height="40.5" viewBox="0 0 44 40.5"><path d="M13.2 19.5 H30.8 M22 10.5 V28.5" fill="none" stroke="#b3b3b3" stroke-width="1.7" stroke-linecap="round"/></svg></div>
<div class="ab mb" style="left:650px;top:39.6px;width:41px"><svg width="41" height="40.5" viewBox="0 0 41 40.5"><path d="M20.6 8.6 C15.8 8.6 12.3 12.2 12.3 16.7 C12.3 22.5 20.6 31.2 20.6 31.2 C20.6 31.2 28.9 22.5 28.9 16.7 C28.9 12.2 25.4 8.6 20.6 8.6 Z M20.6 13.8 A2.9 2.9 0 1 1 20.6 19.6 A2.9 2.9 0 1 1 20.6 13.8 Z" fill="#b3b3b3" fill-rule="evenodd"/></svg></div>
<div class="ab mb" style="left:700.7px;top:39.6px;width:41px"><svg width="41" height="40.5" viewBox="0 0 41 40.5"><circle cx="18.3" cy="17.5" r="7.6" fill="none" stroke="#b3b3b3" stroke-width="2.3"/><path d="M24 23.4 L31 30.3" stroke="#b3b3b3" stroke-width="2.5" stroke-linecap="round"/></svg></div>
</div>
<div class="shot" style="left:1346px;width:1316px">
<div class="side"></div><div class="pan" style="width:494px"></div>
<svg class="ab" style="left:570px;top:0" width="746" height="994" viewBox="568 1 746 994" font-family="Liberation Sans, sans-serif">
<use href="#basemap"/>
<use href="#maplabels"/>
<path d="M783.1 281.3 L786 283.4 L791.2 287.2 L796.4 290.1 L801.6 291.7 L806.8 293.1 L812 294.8 L817.2 296.9 L822.4 300 L827.6 304.2 L832.8 308.3 L836.9 310.9 L842.1 312.5 L845.8 315.1 L847.3 319.2 L850.4 325 L855.6 331.7 L861.9 338 L867.6 342.6 L867.1 348.3 L862.9 346.8 L857.7 343.7 L852.5 339 L847.3 332.8 L842.1 326.5 L836.9 320.8 L832.8 316.1 L827.6 309.9 L822.4 305.2 L817.2 302.6 L812 301.1 L806.8 300 L801.6 299.5 L796.4 297.9 L791.2 293.3 L786 288.1 L783.1 283.4 Z M1114 438.5 L1117 433 L1123.8 430.4 L1130 431 L1134.6 435.8 L1138.6 443.2 L1141.4 451.4 L1146.8 455.4 L1156.2 458 L1168.4 460 L1165 464.2 L1161.6 467 L1159 469 L1155 467.6 L1146.8 464.2 L1140 459.5 L1136.6 454 L1133.2 447.3 L1127.8 442 L1121 439.2 Z M1130.1 465 L1135.1 467.5 L1140.1 472.5 L1145 475 L1153.4 476.7 L1160 478.3 L1166.7 480 L1161.7 482.5 L1153.4 480 L1145 478.3 L1143.4 482.5 L1140.1 482.5 L1135.9 476.7 L1131.7 470.8 Z M1160 477.8 L1171.7 478.5 L1185 477.5 L1200.8 476.7 L1200.8 485.8 L1196.6 495 L1188.3 502.4 L1176.6 504.1 L1166.7 500.8 L1161.7 495.8 L1171.7 492.1 L1180 488.3 L1188.3 484.2 L1193.3 482.2 L1185 483.5 L1176.6 484.7 L1168.3 483.8 Z M830.8 746.2 L834.9 739.5 L841.6 733.4 L853.8 732.7 L863.2 731.1 L867.3 736.8 L866 741.5 L859.2 744.2 L847 746.2 L834.9 747.6 Z" fill="#fdae61" stroke="#2a1a08" stroke-width="0.6" stroke-linejoin="round"/>
<g transform="translate(-1.3,1)">
<text x="581" y="973" font-size="26" font-weight="700" font-style="italic" fill="#050505" stroke="#050505" stroke-width="0.8" textLength="55" lengthAdjust="spacingAndGlyphs">JMap</text>
<text x="592" y="980.5" font-size="6.5" fill="#050505">NG</text>
<path d="M625 942 L634.5 946 L625 950 L615.5 946 Z M615.5 950 L625 954 L634.5 950 M615.5 954 L625 958 L634.5 954" fill="none" stroke="#050505" stroke-width="1.8" stroke-linejoin="round"/>
<circle cx="680.6" cy="960.3" r="12" fill="#e9e9e9"/>
<path d="M675.2 966.5 C674.2 962 675 956.5 679.5 954.5 C684 952.6 688.2 955.5 688 960 C687.8 964.5 683 967.2 675.2 966.5 Z" fill="#191a1a"/>
<path d="M682 956.8 l1 2.1 l2.1 1 l-2.1 1 l-1 2.1 l-1 -2.1 l-2.1 -1 l2.1 -1 z" fill="#e9e9e9"/>
<text x="697" y="966.5" font-size="21" font-weight="400" fill="#f2f2f2" stroke="#f2f2f2" stroke-width="0.8" textLength="77" lengthAdjust="spacingAndGlyphs">mapbox</text>
</g>
</svg>
<div class="ab tile" style="left:13px;top:98px"></div>
<svg class="ab" style="left:26.700000000000003px;top:111.7px" width="23" height="23" viewBox="0 0 23 23">
<g fill="#2f5c6c" stroke="#2f5c6c" stroke-width="0.9" stroke-linejoin="round">
<path d="M11.34 0.7 L22 5.85 L11.34 11.2 L0.7 5.85 Z"/>
<path d="M0.7 11.67 L4.5 9.76 L11.34 13.2 L18.2 9.76 L22 11.67 L11.34 16.9 Z"/>
<path d="M0.7 17.27 L4.5 15.36 L11.34 18.8 L18.2 15.36 L22 17.27 L11.34 22.4 Z"/>
</g></svg>
<svg class="ab" style="left:29.5px;top:182.5px" width="17" height="23" viewBox="0 0 17 23">
<path d="M0.5 0.3 L0.5 19 L5.2 14.8 L9 22.6 L12.6 21 L8.8 13.4 L16.5 13.4 Z" fill="#b8b8b8"/>
</svg>
<svg class="ab" style="left:25px;top:251.5px" width="26" height="26" viewBox="0 0 26 26">
<g transform="rotate(-45 13 13)"><rect x="-1" y="8" width="28" height="10" rx="1.5" fill="#b8b8b8"/>
<g stroke="#efefef" stroke-width="1.3"><path d="M4 8v4M8.5 8v5M13 8v4M17.5 8v5M22 8v4"/></g></g>
</svg>
<svg class="ab" style="left:26.5px;top:324px" width="23" height="23" viewBox="0 0 23 23">
<path d="M3.2 3.2 L19.8 3.2 L13.5 11.5 L19.8 19.8 L3.2 19.8 Z" fill="none" stroke="#b8b8b8" stroke-width="3.1" stroke-linejoin="round"/>
<circle cx="3.2" cy="3.2" r="3.2" fill="#b8b8b8"/><circle cx="19.8" cy="3.2" r="3.2" fill="#b8b8b8"/>
<circle cx="3.2" cy="19.8" r="3.2" fill="#b8b8b8"/><circle cx="19.8" cy="19.8" r="3.2" fill="#b8b8b8"/>
</svg>
<svg class="ab" style="left:25px;top:396px" width="26" height="20" viewBox="0 0 26 20">
<path d="M0 3.8 L7.6 0.8 L7.6 17 L0.8 19.6 Q0 19.9 0 19 Z" fill="#b8b8b8"/>
<path d="M9.3 0.6 L16.7 3.1 L16.7 19.4 L9.3 16.9 Z" fill="#b8b8b8"/>
<path d="M18.4 3 L25.2 0.4 Q26 0.1 26 1 L26 16.2 L18.4 19.2 Z" fill="#b8b8b8"/>
</svg>
<svg class="ab" style="left:25px;top:464px" width="26" height="26" viewBox="0 0 26 26">
<path d="M13 1 V15.5 M6.8 10 L13 16.2 L19.2 10" fill="none" stroke="#b8b8b8" stroke-width="2.6" stroke-linecap="round" stroke-linejoin="round"/>
<rect x="0" y="18.6" width="26" height="7" rx="2.6" fill="#b8b8b8"/>
<path d="M8.5 18 L13 21.5 L17.5 18 Z" fill="#efefef"/>
<circle cx="21.6" cy="22.1" r="1.3" fill="#efefef"/>
</svg>
<div class="ab q" style="left:26px;top:864.7px">?</div>
<svg class="ab" style="left:26.5px;top:941px" width="23" height="26" viewBox="0 0 23 26">
<circle cx="11.5" cy="6.5" r="6.4" fill="#b8b8b8"/>
<path d="M0 25 Q0 15.5 8 15.5 L15 15.5 Q23 15.5 23 25 Q23 26 22 26 L1 26 Q0 26 0 25 Z" fill="#b8b8b8"/>
</svg>
<svg class="ab" style="left:97.3px;top:43.5px" width="22.7" height="17.8" viewBox="0 0 26 20">
<path d="M0 3.8 L7.6 0.8 L7.6 17 L0.8 19.6 Q0 19.9 0 19 Z" fill="#6b6b6b"/>
<path d="M9.3 0.6 L16.7 3.1 L16.7 19.4 L9.3 16.9 Z" fill="#6b6b6b"/>
<path d="M18.4 3 L25.2 0.4 Q26 0.1 26 1 L26 16.2 L18.4 19.2 Z" fill="#6b6b6b"/>
</svg>
<div class="ab t title" style="left:127px;top:42.5px"><span style="transform:scaleX(0.9782)">Projets / V3R City</span></div>
<div class="ab hr" style="left:96px;top:98px"></div>
<div class="ab back" style="left:96px;top:120px">
<svg class="ab" style="left:14px;top:14px" width="20" height="17" viewBox="0 0 20 17"><path d="M8.2 1.2 L1.2 8.5 L8.2 15.8 L8.2 11.7 L15.5 11.7 Q18.6 11.7 18.6 8.5 Q18.6 5.3 15.5 5.3 L8.2 5.3 Z" fill="none" stroke="#555" stroke-width="1.5" stroke-linejoin="round"/></svg>
<span class="ab t" style="left:43px;top:13.5px;font-size:17.5px;color:#555"><span style="transform:scaleX(0.9901)">Retour</span></span></div>
<div class="ab t h2" style="left:233.5px;top:132.5px"><span style="transform:scaleX(0.9602)">Milieux naturels</span></div>
<div class="ab t tab" style="left:120.5px;top:197.3px"><span style="transform:scaleX(0.9131)">GÉNÉRAL</span></div>
<div class="ab t tab" style="left:291.7px;top:197.3px"><span style="transform:scaleX(0.9194)">STYLES</span></div>
<div class="ab t tab act" style="left:449.5px;top:197.3px"><span style="transform:scaleX(0.934)">FILTRE(S)</span></div>
<div class="ab ul" style="left:405px;top:234px"></div>
<div class="ab card" style="left:96px;top:267px"></div>
<div class="ab t row" style="left:117px;top:292.3px"><span style="transform:scaleX(0.9715)">Frayères</span></div>
<div class="ab t row" style="left:117px;top:327.5px"><span style="transform:scaleX(0.9842)">Milieux humides</span></div>
<div class="ab tg on" style="left:498px;top:288.5px"><i></i></div>
<div class="ab tg" style="left:498px;top:323.4px"><i></i></div>
<div class="ab green" style="left:92px;top:276.3px"></div>
<div class="ab mb" style="left:545px;top:37.6px;width:41.6px"><svg width="41.6" height="40.5" viewBox="0 0 41.6 40.5"><path d="M29 19.6 H13 M19.8 12.6 L12.8 19.6 L19.8 26.6" fill="none" stroke="#b3b3b3" stroke-width="2.2" stroke-linecap="round" stroke-linejoin="round"/></svg></div>
<div class="ab mb" style="left:596.3px;top:37.6px;width:44px"><svg width="44" height="40.5" viewBox="0 0 44 40.5"><path d="M13.2 19.5 H30.8 M22 10.5 V28.5" fill="none" stroke="#b3b3b3" stroke-width="1.7" stroke-linecap="round"/></svg></div>
<div class="ab mb" style="left:650px;top:37.6px;width:41px"><svg width="41" height="40.5" viewBox="0 0 41 40.5"><path d="M20.6 8.6 C15.8 8.6 12.3 12.2 12.3 16.7 C12.3 22.5 20.6 31.2 20.6 31.2 C20.6 31.2 28.9 22.5 28.9 16.7 C28.9 12.2 25.4 8.6 20.6 8.6 Z M20.6 13.8 A2.9 2.9 0 1 1 20.6 19.6 A2.9 2.9 0 1 1 20.6 13.8 Z" fill="#b3b3b3" fill-rule="evenodd"/></svg></div>
<div class="ab mb" style="left:700.7px;top:37.6px;width:41px"><svg width="41" height="40.5" viewBox="0 0 41 40.5"><circle cx="18.3" cy="17.5" r="7.6" fill="none" stroke="#b3b3b3" stroke-width="2.3"/><path d="M24 23.4 L31 30.3" stroke="#b3b3b3" stroke-width="2.5" stroke-linecap="round"/></svg></div>
<svg class="ab" style="left:139px;top:708.9px;filter:drop-shadow(0 1px 1px rgba(0,0,0,.25))" width="16" height="24" viewBox="-2.1 -2 16 24"><path d="M0 0 L0 15.2 L3.5 12 L6.4 19 L8.9 18 L6.2 11.5 L10.8 11.4 Z" fill="#000" stroke="#fff" stroke-width="2.2" stroke-linejoin="round" paint-order="stroke"/></svg>
</div>
</body></html>
